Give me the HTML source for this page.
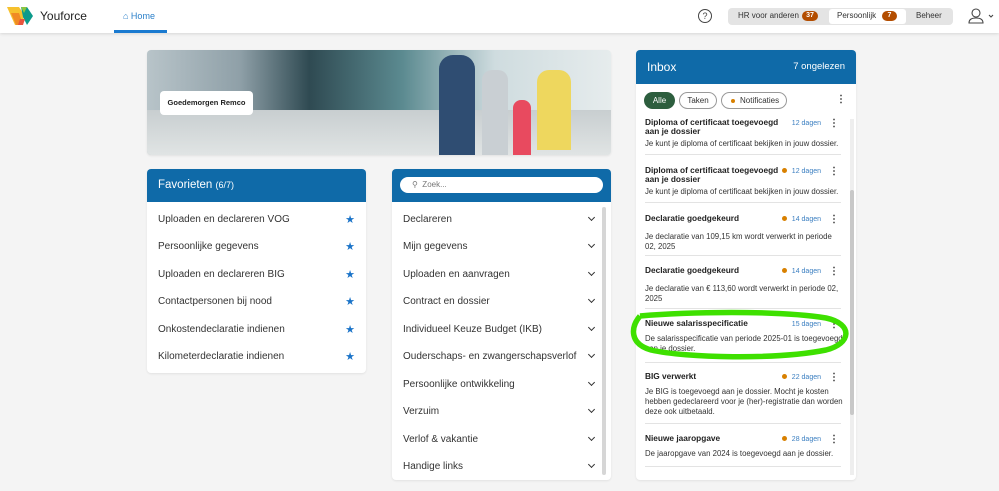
<!DOCTYPE html>
<html><head><meta charset="utf-8"><style>
*{box-sizing:border-box;margin:0;padding:0}
body{width:999px;height:491px;overflow:hidden;background:#f4f4f4;font-family:"Liberation Sans",sans-serif;color:#333;position:relative}
.hdr{position:absolute;left:0;top:0;width:999px;height:33px;background:#fff;box-shadow:0 1px 3px rgba(0,0,0,.12)}
.abs{position:absolute}
.card{position:absolute;background:#fff;border-radius:4px;overflow:hidden;box-shadow:0 1px 2px rgba(0,0,0,.08)}
.bh{background:#0f6aa8;color:#fff}
.row{position:absolute;left:11px;font-size:10px;color:#333}
.star{position:absolute;right:11px;color:#1a73c8;font-size:11px}
.chev{position:absolute;right:17px;width:5px;height:5px;border-right:1.8px solid #333;border-bottom:1.8px solid #333;transform:rotate(45deg)}
.it{position:absolute;left:9px;width:198px;font-size:8px}
.it b{display:block;font-size:8.3px;color:#222;width:140px;line-height:9px}
.it p{font-size:7.8px;color:#333;line-height:10px;margin-top:3px;white-space:normal}
.dg{position:absolute;right:22px;font-size:7px;color:#3a7ec0}
.dot{display:inline-block;width:5px;height:5px;border-radius:50%;background:#d88000;margin-right:5px}
.kb{position:absolute;right:4px;font-size:10px;font-weight:bold;color:#333}
.sep{position:absolute;left:9px;width:196px;height:1px;background:#e3e3e3}
.nw{white-space:nowrap}
</style></head><body>
<div class="hdr">
 <svg class="abs" style="left:7px;top:7px" width="26" height="18" viewBox="0 0 26 18"><polygon points="0,0 12,0 18,9 12,18 8,18" fill="#f6c12e"/><polygon points="4,6 12,6 16,18 9,18" fill="#f08a24"/><polygon points="14,0 20,0 26,9 20,18 16,10" fill="#0c9a8b"/><polygon points="14,0 20,0 17,6" fill="#8dc63f"/><polygon points="13,12 18,12 16,18 11,18" fill="#e8543d"/></svg>
 <div class="abs" style="left:40px;top:9px;font-size:12px;color:#222">Youforce</div>
 <div class="abs" style="left:123px;top:11px;font-size:9px;color:#2a7fc9">⌂ Home</div>
 <div class="abs" style="left:114px;top:30px;width:53px;height:3px;background:#1a7ad0"></div>
 <div class="abs" style="left:698px;top:9px;width:14px;height:14px;border:1.3px solid #444;border-radius:50%;font-size:9px;text-align:center;line-height:12px;color:#444">?</div>
 <div class="abs" style="left:728px;top:8px;width:225px;height:17px;background:#e4e4e4;border-radius:4px"></div>
 <div class="abs" style="left:738px;top:11px;font-size:8px;color:#333">HR voor anderen</div>
 <div class="abs" style="left:802px;top:11px;width:16px;height:10px;background:#b34d00;color:#fff;border-radius:5px;font-size:7px;text-align:center;line-height:10px;font-weight:bold">37</div>
 <div class="abs" style="left:829px;top:9px;width:77px;height:15px;background:#fff;border-radius:3px"></div>
 <div class="abs" style="left:837px;top:11px;font-size:8px;color:#333">Persoonlijk</div>
 <div class="abs" style="left:882px;top:11px;width:15px;height:10px;background:#b34d00;color:#fff;border-radius:5px;font-size:7px;text-align:center;line-height:10px;font-weight:bold">7</div>
 <div class="abs" style="left:916px;top:11px;font-size:8px;color:#333">Beheer</div>
 <svg class="abs" style="left:968px;top:8px" width="28" height="16" viewBox="0 0 28 16"><circle cx="8" cy="5" r="4" fill="none" stroke="#444" stroke-width="1.1"/><path d="M1 15 Q1 10 8 10 Q15 10 15 15 Z" fill="none" stroke="#444" stroke-width="1.1"/><path d="M21 7 L23 9 L25 7" fill="none" stroke="#444" stroke-width="1.1"/></svg>
</div>

<div class="card" style="left:147px;top:50px;width:464px;height:105px;background:linear-gradient(90deg,#b8c4c9 0%,#8fa0a8 20%,#2f4a52 35%,#5b8a90 55%,#cfdcdf 75%,#e6eced 100%)">
 <div class="abs" style="left:0;top:60px;width:464px;height:45px;background:linear-gradient(180deg,#c8ced0,#e0e4e4)"></div>
 <div class="abs" style="left:292px;top:5px;width:36px;height:100px;background:#2f4d72;border-radius:14px 14px 0 0"></div>
 <div class="abs" style="left:335px;top:20px;width:26px;height:85px;background:#c9cfd3;border-radius:10px 10px 0 0"></div>
 <div class="abs" style="left:366px;top:50px;width:18px;height:55px;background:#e84a5f;border-radius:8px 8px 0 0"></div>
 <div class="abs" style="left:390px;top:20px;width:34px;height:80px;background:#eed75e;border-radius:12px 12px 0 0"></div>
 <div class="abs" style="left:13px;top:41px;width:93px;height:24px;background:#fff;border-radius:4px;font-size:7.5px;font-weight:bold;color:#222;line-height:24px;text-align:center">Goedemorgen Remco</div>
</div>

<div class="card" style="left:147px;top:169px;width:219px;height:204px">
 <div class="bh" style="height:33px;padding:10px 11px;font-size:11.5px">Favorieten <span style="font-size:9px">(6/7)</span></div>
 <div class="row" style="top:45px">Uploaden en declareren VOG</div><div class="star" style="top:44px">★</div>
 <div class="row" style="top:72px">Persoonlijke gegevens</div><div class="star" style="top:71px">★</div>
 <div class="row" style="top:100px">Uploaden en declareren BIG</div><div class="star" style="top:99px">★</div>
 <div class="row" style="top:127px">Contactpersonen bij nood</div><div class="star" style="top:126px">★</div>
 <div class="row" style="top:155px">Onkostendeclaratie indienen</div><div class="star" style="top:154px">★</div>
 <div class="row" style="top:182px">Kilometerdeclaratie indienen</div><div class="star" style="top:181px">★</div>
</div>

<div class="card" style="left:392px;top:169px;width:219px;height:311px">
 <div class="bh" style="height:33px"><div class="abs" style="left:8px;top:8px;width:203px;height:16px;background:#fff;border-radius:8px;color:#777;font-size:8px;line-height:16px;padding-left:12px">⚲ &nbsp;Zoek...</div></div>
 <div class="abs" style="right:5px;top:38px;width:4px;height:268px;background:#d6d6d6;border-radius:2px"></div>
 <div class="row" style="top:45px">Declareren</div><div class="chev" style="top:46px"></div>
 <div class="row" style="top:72px">Mijn gegevens</div><div class="chev" style="top:73px"></div>
 <div class="row" style="top:100px">Uploaden en aanvragen</div><div class="chev" style="top:101px"></div>
 <div class="row" style="top:127px">Contract en dossier</div><div class="chev" style="top:128px"></div>
 <div class="row" style="top:155px">Individueel Keuze Budget (IKB)</div><div class="chev" style="top:156px"></div>
 <div class="row" style="top:182px">Ouderschaps- en zwangerschapsverlof</div><div class="chev" style="top:183px"></div>
 <div class="row" style="top:210px">Persoonlijke ontwikkeling</div><div class="chev" style="top:211px"></div>
 <div class="row" style="top:237px">Verzuim</div><div class="chev" style="top:238px"></div>
 <div class="row" style="top:265px">Verlof &amp; vakantie</div><div class="chev" style="top:266px"></div>
 <div class="row" style="top:292px">Handige links</div><div class="chev" style="top:293px"></div>
</div>

<div class="card" style="left:636px;top:50px;width:220px;height:430px">
 <div class="bh" style="height:34px;padding:10px 11px;font-size:12px">Inbox<span style="float:right;font-size:9.5px;margin-top:1px">7 ongelezen</span></div>
 <div class="abs" style="left:8px;top:42px;width:31px;height:17px;background:#2d5e3e;color:#fff;border-radius:9px;font-size:8px;text-align:center;line-height:17px">Alle</div>
 <div class="abs" style="left:43px;top:42px;width:38px;height:17px;border:1px solid #999;border-radius:9px;font-size:8px;text-align:center;line-height:15px">Taken</div>
 <div class="abs" style="left:85px;top:42px;width:66px;height:17px;border:1px solid #999;border-radius:9px;font-size:8px;line-height:15px;padding-left:9px"><span class="dot" style="width:4px;height:4px"></span>Notificaties</div>
 <div class="abs" style="left:200px;top:44px;font-size:10px;font-weight:bold">⋮</div>
 <div class="abs" style="left:214px;top:69px;width:4px;height:356px;background:#eee"></div>
 <div class="abs" style="left:214px;top:140px;width:4px;height:225px;background:#c8c8c8;border-radius:2px"></div>
 <div class="abs" style="left:0;top:64px;width:212px;height:362px">
  <div class="it" style="top:4px"><b>Diploma of certificaat toegevoegd aan je dossier</b><p class="nw">Je kunt je diploma of certificaat bekijken in jouw dossier.</p><span class="dg" style="top:2px">12 dagen</span><span class="kb" style="top:0">⋮</span></div>
  <div class="sep" style="top:40px"></div>
  <div class="it" style="top:52px"><b>Diploma of certificaat toegevoegd aan je dossier</b><p class="nw">Je kunt je diploma of certificaat bekijken in jouw dossier.</p><span class="dg" style="top:2px"><span class="dot"></span>12 dagen</span><span class="kb" style="top:0">⋮</span></div>
  <div class="sep" style="top:88px"></div>
  <div class="it" style="top:100px"><b>Declaratie goedgekeurd</b><p style="margin-top:9px">Je declaratie van 109,15 km wordt verwerkt in periode 02, 2025</p><span class="dg" style="top:2px"><span class="dot"></span>14 dagen</span><span class="kb" style="top:0">⋮</span></div>
  <div class="sep" style="top:141px"></div>
  <div class="it" style="top:152px"><b>Declaratie goedgekeurd</b><p style="margin-top:9px">Je declaratie van € 113,60 wordt verwerkt in periode 02, 2025</p><span class="dg" style="top:2px"><span class="dot"></span>14 dagen</span><span class="kb" style="top:0">⋮</span></div>
  <div class="sep" style="top:194px"></div>
  <div class="it" style="top:205px"><b>Nieuwe salarisspecificatie</b><p style="margin-top:6px">De salarisspecificatie van periode 2025-01 is toegevoegd aan je dossier.</p><span class="dg" style="top:2px">15 dagen</span><span class="kb" style="top:0">⋮</span></div>
  <div class="sep" style="top:248px"></div>
  <div class="it" style="top:258px"><b>BIG verwerkt</b><p style="margin-top:6px">Je BIG is toegevoegd aan je dossier. Mocht je kosten hebben gedeclareerd voor je (her)-registratie dan worden deze ook uitbetaald.</p><span class="dg" style="top:2px"><span class="dot"></span>22 dagen</span><span class="kb" style="top:0">⋮</span></div>
  <div class="sep" style="top:309px"></div>
  <div class="it" style="top:320px"><b>Nieuwe jaaropgave</b><p style="margin-top:6px">De jaaropgave van 2024 is toegevoegd aan je dossier.</p><span class="dg" style="top:2px"><span class="dot"></span>28 dagen</span><span class="kb" style="top:0">⋮</span></div>
  <div class="sep" style="top:352px"></div>
 </div>
</div>
<svg class="abs" style="left:626px;top:306px" width="230" height="60" viewBox="0 0 230 60"><path d="M14 10 C60 6 150 4 200 12 C228 18 225 38 200 44 C150 54 60 52 25 44 C4 38 4 22 14 10" fill="none" stroke="#3ee000" stroke-width="5.5"/></svg>
</body></html>
